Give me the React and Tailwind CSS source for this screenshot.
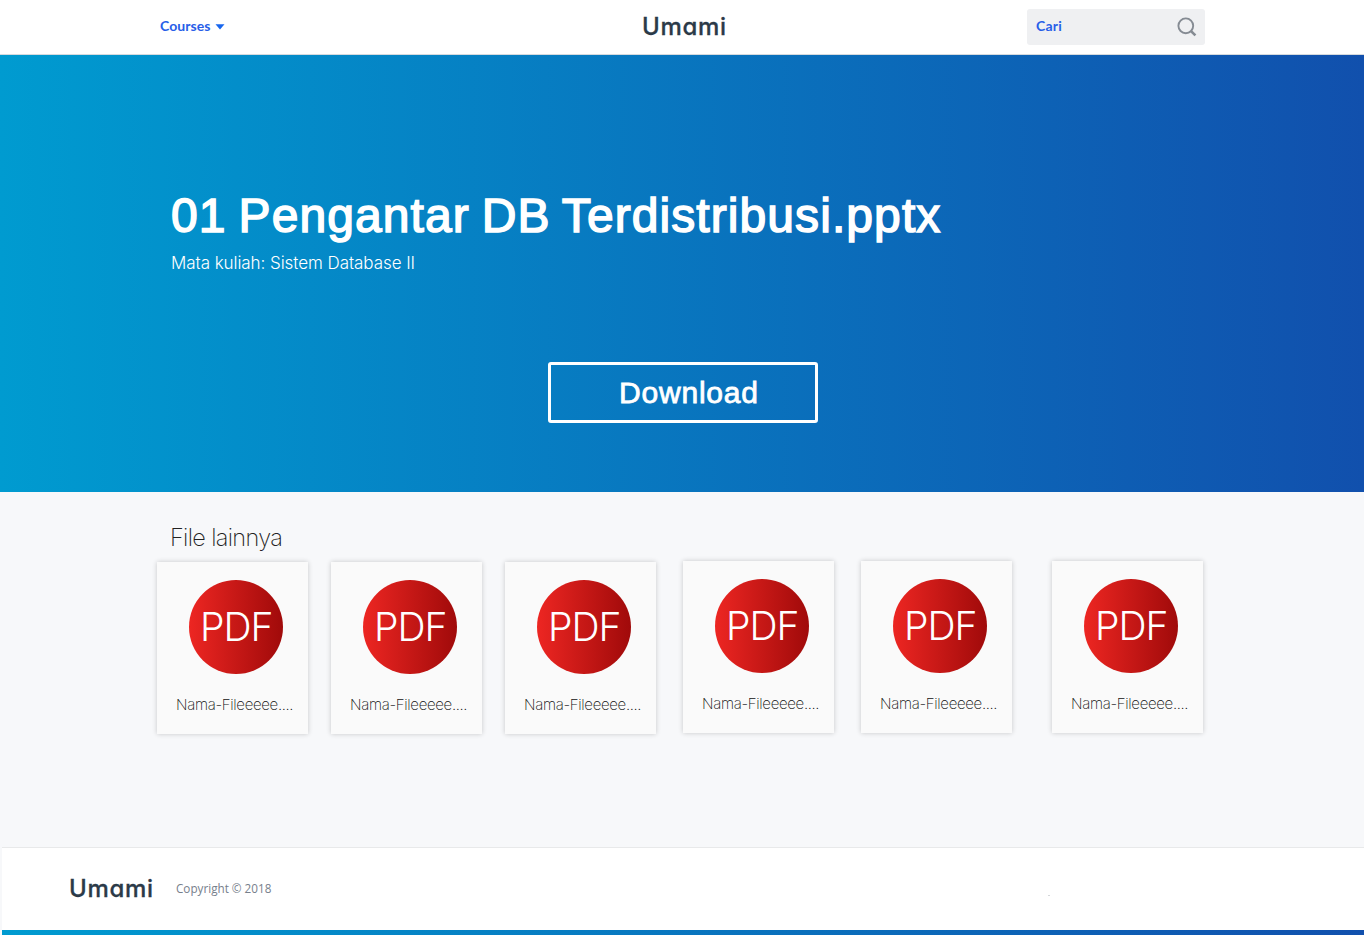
const cards = [
  { left: 'ml-0', top: 'mt-px' },
  { left: 'ml-[23px]', top: 'mt-px' },
  { left: 'ml-[23px]', top: 'mt-px' },
  { left: 'ml-[27px]', top: 'mt-0' },
  { left: 'ml-[27px]', top: 'mt-0' },
  { left: 'ml-[40px]', top: 'mt-0' },
];

function Logo() {
  return (
    <span className="block w-[86px] whitespace-nowrap font-['Inter',sans-serif] text-[24px] leading-[30px] font-medium tracking-[0.7px] text-[#2b3a48] [font-feature-settings:'cv11'] [-webkit-text-stroke:0.3px_#2b3a48]">
      Umami
    </span>
  );
}

function FileCard({ left, top }) {
  return (
    <article className={`${left} ${top} flex h-[172px] w-[151px] shrink-0 flex-col bg-[#fafafa] pt-[18px] shadow-[0_0_5px_rgba(0,0,0,0.2)]`}>
      <div className="ml-[32px] flex h-[94px] w-[94px] items-center rounded-full bg-linear-to-r/srgb from-[#ed2622] to-[#a00a0a]">
        <span className="pl-[11px] font-['Inter',sans-serif] text-[39px] leading-[40px] font-light tracking-[-1px] text-white">PDF</span>
      </div>
      <p className="mt-[21px] ml-[19px] whitespace-nowrap font-['Inter',sans-serif] text-[15px] leading-[20px] font-extralight tracking-[-0.32px] text-[#111]">Nama-Fileeeee....</p>
    </article>
  );
}

export default function App() {
  return (
    <div className="flex h-[936px] w-[1364px] flex-col overflow-hidden bg-[#f7f8fa]">
      <header className="flex h-[55px] shrink-0 items-start border-b border-[#d5dade] bg-white">
        <button className="mt-[16px] ml-[160px] flex w-[482px] items-center font-['Lato',sans-serif] text-[14px] leading-[19px] font-bold tracking-[0.06px] text-[#285ee8]">
          Courses
          <svg className="mt-[3px] ml-[5px]" width="10" height="6" viewBox="0 0 10 6" fill="#1766ee">
            <path d="M0.5 0.3h9L5 5.5z" />
          </svg>
        </button>
        <div className="mt-[12px]">
          <Logo />
        </div>
        <label className="mt-[9px] ml-[299px] flex h-[36px] w-[178px] items-center justify-between rounded-[3px] bg-[#eff0f2] pr-[8px] pl-[9px]">
          <span className="mt-[-3px] font-['Lato',sans-serif] text-[14px] leading-[19px] font-bold tracking-[0.2px] text-[#285ee8]">Cari</span>
          <svg className="mb-px" width="20" height="20" viewBox="0 0 20 20" fill="none" stroke="#858b93">
            <circle cx="8.8" cy="8.8" r="7.4" strokeWidth="1.9" />
            <path d="M13.8 13.8l4.6 4.6" strokeWidth="2.6" />
          </svg>
        </label>
      </header>

      <section className="flex h-[437px] shrink-0 flex-col bg-linear-to-r/srgb from-[#009bd0] to-[#1150ad] text-white">
        <h1 className="mt-[131px] ml-[171px] h-[60px] whitespace-nowrap font-['Liberation_Sans',sans-serif] text-[48px] leading-[60px] font-normal tracking-[1.08px] [word-spacing:-2.4px] [-webkit-text-stroke:1.5px_#fff]">
          01 Pengantar DB Terdistribusi.pptx
        </h1>
        <p className="mt-[5px] ml-[171px] whitespace-nowrap font-['Inter',sans-serif] text-[17px] leading-[24px] font-light tracking-[-0.06px]">
          Mata kuliah: Sistem Database II
        </p>
        <button className="mt-[87px] ml-[548px] flex h-[61px] w-[270px] items-center rounded-[3px] border-[3px] border-white pl-[68px] font-['Liberation_Sans',sans-serif] text-[30px] leading-[36px] tracking-[0.8px] [-webkit-text-stroke:0.8px_#fff]">
          Download
        </button>
      </section>

      <main className="flex h-[355px] shrink-0 flex-col">
        <h2 className="mt-[30px] ml-[170px] h-[32px] whitespace-nowrap font-['Inter',sans-serif] text-[23.5px] leading-[32px] font-extralight tracking-[-0.66px] text-[#222]">
          File lainnya
        </h2>
        <div className="mt-[7px] ml-[157px] flex items-start">
          {cards.map((card, i) => (
            <FileCard key={i} {...card} />
          ))}
        </div>
      </main>

      <footer className="ml-[2px] flex h-[88px] shrink-0 flex-col border-t border-[#e8e9ea] bg-white">
        <div className="flex h-[82px] items-start">
          <div className="mt-[26px] ml-[67px]">
            <Logo />
          </div>
          <p className="mt-[31px] ml-[21px] w-[872px] font-['Open_Sans',sans-serif] text-[11.7px] leading-[18px] text-[#77808c]">Copyright © 2018</p>
          <span className="mt-[47px] h-px w-[2px] bg-[#d5d7da]" />
        </div>
        <div className="h-[5px] bg-linear-to-r/srgb from-[#009bd0] to-[#1150ad]" />
      </footer>
      <div className="h-px bg-white" />
    </div>
  );
}
